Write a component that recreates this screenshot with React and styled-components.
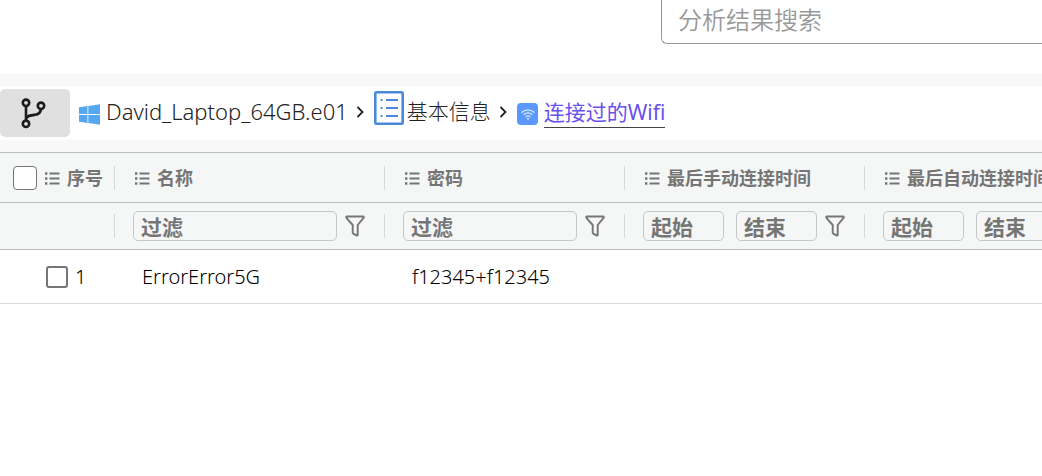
import React, { useState } from 'react';
import styled, { createGlobalStyle } from 'styled-components';

const GlobalStyle = createGlobalStyle`
  * {
    box-sizing: border-box;
  }

  body {
    margin: 0;
    background: #fff;
    color: #222;
    font-family: 'Noto Sans', 'Noto Sans CJK SC', sans-serif;
    overflow-x: hidden;
  }

  input,
  button {
    font-family: inherit;
  }
`;

const TopBar = styled.header`
  display: flex;
  justify-content: flex-end;
  height: 74px;
`;

const SearchInput = styled.input`
  width: 381px;
  height: 44px;
  padding: 0 16px 5px;
  border: 1px solid #999;
  border-top: none;
  border-right: none;
  border-radius: 0 0 0 6px;
  font-size: 24px;
  font-weight: 350;
  outline: none;

  &::placeholder {
    color: #999;
    opacity: 1;
  }
`;

const Band = styled.div`
  padding: 12px 0;
  background: #f8f8f8;
`;

const Breadcrumb = styled.nav`
  display: flex;
  align-items: center;
  height: 54px;
  background: #fff;
`;

const BranchButton = styled.button`
  display: flex;
  align-items: center;
  justify-content: center;
  width: 70px;
  height: 48px;
  margin-right: 9px;
  padding: 0 2px 0 0;
  border: none;
  border-radius: 5px;
  background: #e0e0e0;
`;

const Crumb = styled.a`
  display: flex;
  align-items: center;
  gap: ${(props) => props.$gap || 6}px;
  color: ${(props) => (props.$active ? '#6a50ec' : '#222')};
  font-size: ${(props) => props.$size || 21}px;
  font-weight: ${(props) => props.$weight || 400};
  line-height: 30px;
  text-decoration: none;
  white-space: nowrap;
`;

const CrumbIcon = styled.span`
  display: flex;
  padding-top: ${(props) => (props.$raised ? 0 : 2)}px;
  padding-bottom: ${(props) => (props.$raised ? 10 : 0)}px;
`;

const CrumbLabel = styled.span`
  margin-bottom: ${(props) => (props.$active ? 2 : 3)}px;
  border-bottom: 1px solid ${(props) => (props.$active ? '#444' : 'transparent')};
`;

const ChevronIcon = styled.svg`
  flex: none;
  margin: 0 10px 3px 8px;
`;

const TableWrap = styled.div`
  overflow: hidden;
`;

const Table = styled.table`
  width: 1105px;
  border-collapse: separate;
  border-spacing: 0;
  table-layout: fixed;
`;

const HeadCell = styled.th`
  height: ${(props) => props.$height}px;
  padding: 0;
  border-top: ${(props) => (props.$first ? '1px solid #babfc0' : 'none')};
  border-bottom: 1px solid #babfc0;
  background: #f5f7f7;
  color: #757575;
  font-size: 18px;
  font-weight: 700;
  line-height: 24px;
  text-align: left;
  white-space: nowrap;
`;

const CellContent = styled.div`
  display: flex;
  align-items: center;
  gap: ${(props) => props.$gap || 6}px;
  padding-left: ${(props) => (props.$narrow ? 13 : 18)}px;
`;

const Separator = styled.span`
  width: 1px;
  height: 24px;
  margin-left: auto;
  background: #d5d9da;
`;

const DateRange = styled.div`
  display: flex;
  flex: 1;
  gap: 12px;
  min-width: 0;
`;

const FilterInput = styled.input`
  flex: 1;
  min-width: 0;
  width: 0;
  height: 30px;
  padding: 2px 7px 0;
  border: 1px solid #c4c8c8;
  border-radius: 5px;
  background: transparent;
  font-size: 21px;
  font-weight: 700;
  outline: none;

  &::placeholder {
    color: #757575;
    opacity: 1;
  }
`;

const FilterButton = styled.button`
  display: flex;
  width: 20px;
  height: 22px;
  margin-right: 11px;
  padding: 0;
  border: none;
  background: none;
`;

const Checkbox = styled.input`
  appearance: none;
  flex: none;
  width: ${(props) => props.$size}px;
  height: ${(props) => props.$size}px;
  margin: 0;
  border: ${(props) => props.$border}px solid #757575;
  border-radius: ${(props) => props.$radius}px;
  background: #fff;

  &:checked {
    background: #6a50ec;
  }
`;

const BodyCell = styled.td`
  height: 54px;
  padding: 0 0 0 27px;
  border-bottom: 1px solid #dcdcdc;
  color: #000;
  font-size: 20px;
  font-weight: 350;
  line-height: 28px;
  white-space: nowrap;
`;

const RowLabel = styled.label`
  display: flex;
  align-items: center;
  gap: 7px;
  padding-left: 19px;
`;

const columns = [
  { key: 'name', title: '名称', width: 270 },
  { key: 'password', title: '密码', width: 240 },
  { key: 'manual', title: '最后手动连接时间', width: 240, range: true },
  { key: 'auto', title: '最后自动连接时间', width: 240, range: true },
];

const rows = [{ id: 1, name: 'ErrorError5G', password: 'f12345+f12345' }];

const BranchIcon = () => (
  <svg width="28" height="32" viewBox="0 0 28 32" fill="none" stroke="#1c1c1c" strokeWidth="2.6">
    <circle cx="6" cy="5.8" r="3.2" />
    <circle cx="6" cy="26.8" r="3.2" />
    <circle cx="21" cy="8.8" r="3.2" />
    <path d="M6 9v14.6M21 12c-.4 3.6-2.4 5.4-6 5.8-4.5.4-8 .6-9 4.2" />
  </svg>
);

const WindowsIcon = () => (
  <svg width="21" height="21" viewBox="0 0 21 21" fill="#55a7f0">
    <path d="M0 3.2l8.5-1.2v8H0zM9.3 1.9L21 .3V10H9.3zM0 10.9h8.5v8L0 17.8zM9.3 10.9H21v9.8L9.3 19.1z" />
  </svg>
);

const InfoIcon = () => (
  <svg width="30" height="34" viewBox="0 0 30 34" fill="none" stroke="#4b89dc" strokeWidth="2">
    <rect x="1.3" y="1.3" width="27.4" height="31.4" rx="1.5" strokeWidth="2.6" />
    <path d="M12 9h12M12 17h12M12 25h12M6.5 9h2M6.5 17h2M6.5 25h2" />
  </svg>
);

const WifiIcon = () => (
  <svg width="21" height="22" viewBox="0 0 21 22" fill="none">
    <rect width="21" height="22" rx="4" fill="#5a98fb" />
    <g stroke="#dce9ff" strokeWidth="1.2" strokeLinecap="round">
      <path d="M5 9.3q6-5 12 0M7 11.5q4-3.2 8 0M9 13.7q2-1.5 4 0" />
    </g>
    <circle cx="11" cy="15.8" r="1" fill="#dce9ff" />
  </svg>
);

const Chevron = () => (
  <ChevronIcon width="8" height="12" viewBox="0 0 8 12" fill="none" stroke="#222" strokeWidth="1.8">
    <path d="M1.5 1l5 5-5 5" />
  </ChevronIcon>
);

const ListIcon = () => (
  <svg width="18" height="18" viewBox="0 0 18 18" fill="none" stroke="#757575">
    <path d="M6.5 4.5H16.5M6.5 9.5H16.5M6.5 14.5H16.5" strokeWidth="1.8" />
    <path d="M2 4.5h2.4M2 9.5h2.4M2 14.5h2.4" strokeWidth="2.4" />
  </svg>
);

const FunnelIcon = () => (
  <svg width="20" height="22" viewBox="0 0 20 22" fill="none" stroke="#757575" strokeWidth="1.9" strokeLinejoin="round">
    <path d="M2 1.5h16q1.2.2.6 1.3L12.7 10v10q-.4.8-1.2.4l-3.2-1.8q-.6-.4-.6-1V10L1.4 2.8Q.9 1.7 2 1.5z" />
  </svg>
);

const App = () => {
  const [selected, setSelected] = useState([]);

  const toggleAll = () => {
    setSelected(selected.length === rows.length ? [] : rows.map((r) => r.id));
  };

  const toggleRow = (id) => {
    setSelected((prev) => (prev.includes(id) ? prev.filter((s) => s !== id) : [...prev, id]));
  };

  return (
    <>
      <GlobalStyle />
      <TopBar>
        <SearchInput type="search" placeholder="分析结果搜索" aria-label="分析结果搜索" />
      </TopBar>

      <Band>
        <Breadcrumb>
          <BranchButton type="button" aria-label="分支">
            <BranchIcon />
          </BranchButton>
          <Crumb href="#device" $size={22} $weight={350}>
            <CrumbIcon>
              <WindowsIcon />
            </CrumbIcon>
            <CrumbLabel>David_Laptop_64GB.e01</CrumbLabel>
          </Crumb>
          <Chevron />
          <Crumb href="#info" $gap={3} $weight={300}>
            <CrumbIcon $raised>
              <InfoIcon />
            </CrumbIcon>
            <CrumbLabel>基本信息</CrumbLabel>
          </Crumb>
          <Chevron />
          <Crumb href="#wifi" $active>
            <CrumbIcon>
              <WifiIcon />
            </CrumbIcon>
            <CrumbLabel $active>连接过的Wifi</CrumbLabel>
          </Crumb>
        </Breadcrumb>
      </Band>

      <TableWrap>
        <Table>
          <colgroup>
            <col style={{ width: 115 }} />
            {columns.map((c) => (
              <col key={c.key} style={{ width: c.width }} />
            ))}
          </colgroup>
          <thead>
            <tr>
              <HeadCell $height={51} $first>
                <CellContent $narrow>
                  <Checkbox
                    type="checkbox"
                    aria-label="全选"
                    $size={24}
                    $border={1}
                    $radius={4}
                    checked={selected.length === rows.length}
                    onChange={toggleAll}
                  />
                  <ListIcon />
                  序号
                  <Separator />
                </CellContent>
              </HeadCell>
              {columns.map((c) => (
                <HeadCell key={c.key} $height={51} $first>
                  <CellContent>
                    <ListIcon />
                    {c.title}
                    <Separator />
                  </CellContent>
                </HeadCell>
              ))}
            </tr>
            <tr>
              <HeadCell $height={47}>
                <CellContent>
                  <Separator />
                </CellContent>
              </HeadCell>
              {columns.map((c) => (
                <HeadCell key={c.key} $height={47}>
                  <CellContent $gap={8}>
                    {c.range ? (
                      <DateRange>
                        <FilterInput placeholder="起始" aria-label={`${c.title} 起始`} />
                        <FilterInput placeholder="结束" aria-label={`${c.title} 结束`} />
                      </DateRange>
                    ) : (
                      <FilterInput placeholder="过滤" aria-label={`${c.title} 过滤`} />
                    )}
                    <FilterButton type="button" aria-label={`${c.title} 筛选`}>
                      <FunnelIcon />
                    </FilterButton>
                    <Separator />
                  </CellContent>
                </HeadCell>
              ))}
            </tr>
          </thead>
          <tbody>
            {rows.map((row) => (
              <tr key={row.id}>
                <BodyCell>
                  <RowLabel>
                    <Checkbox
                      type="checkbox"
                      $size={22}
                      $border={2}
                      $radius={3}
                      checked={selected.includes(row.id)}
                      onChange={() => toggleRow(row.id)}
                    />
                    {row.id}
                  </RowLabel>
                </BodyCell>
                {columns.map((c) => (
                  <BodyCell key={c.key}>{row[c.key]}</BodyCell>
                ))}
              </tr>
            ))}
          </tbody>
        </Table>
      </TableWrap>
    </>
  );
};

export default App;
